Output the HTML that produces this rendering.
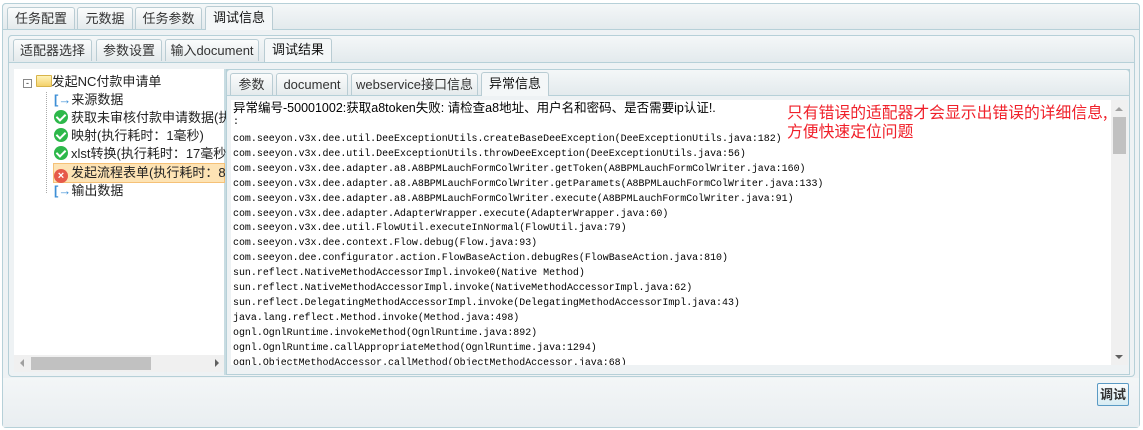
<!DOCTYPE html>
<html><head><meta charset="utf-8">
<style>
*{box-sizing:border-box;margin:0;padding:0}
body{width:1143px;height:430px;background:#fff;font-family:"Liberation Sans","Noto Sans CJK SC",sans-serif;font-size:12px;color:#222;position:relative;overflow:hidden}
.abs{position:absolute}
.hdr{background:linear-gradient(#f4f7f8,#e3eaed);border:1px solid #b6d0d8;border-radius:4px 4px 0 0}
.tab{position:absolute;height:22px;border:1px solid #b9ccd3;border-bottom:none;border-radius:3px 3px 0 0;background:linear-gradient(#fbfcfc,#e4eaec);text-align:center;line-height:21px;font-size:13px;color:#333}
.tab.act{background:#f4f7f8;height:24px;color:#111}
.mono{font-family:"Liberation Mono","Noto Sans CJK SC",monospace;font-size:9.95px;line-height:14.9px;white-space:pre;color:#000}
.tree div{position:absolute;font-size:13px;white-space:nowrap;color:#222;height:18px;line-height:18px}
.ok{display:inline-block;width:14px;height:14px;border-radius:50%;background:#2db84a;vertical-align:-2px;margin-right:3px;position:relative}
.ok:after{content:"";position:absolute;left:4px;top:2px;width:4px;height:7px;border:solid #fff;border-width:0 2px 2px 0;transform:rotate(45deg)}
.err{display:inline-block;width:14px;height:14px;border-radius:50%;background:#e65a4a;vertical-align:-2px;margin-right:3px;color:#fff;font-size:11px;line-height:14px;text-align:center;font-weight:bold}
</style></head><body>
<div class="abs" style="left:2px;top:3px;width:1138px;height:425px;border:1px solid #b6d0d8;border-radius:4px;background:#eef2f4"></div>
<div class="abs hdr" style="left:2px;top:3px;width:1138px;height:27px"></div>
<div class="tab" style="left:7px;top:7px;width:68px">任务配置</div>
<div class="tab" style="left:77px;top:7px;width:56px">元数据</div>
<div class="tab" style="left:135px;top:7px;width:67px">任务参数</div>
<div class="tab act" style="left:205px;top:6px;width:68px">调试信息</div>
<div class="abs" style="left:8px;top:35px;width:1127px;height:342px;border:1px solid #b6d0d8;border-radius:4px;background:#eef2f4"></div>
<div class="abs hdr" style="left:8px;top:35px;width:1127px;height:28px"></div>
<div class="tab" style="left:13px;top:39px;width:79px">适配器选择</div>
<div class="tab" style="left:96px;top:39px;width:66px">参数设置</div>
<div class="tab" style="left:165px;top:39px;width:94px">输入document</div>
<div class="tab act" style="left:264px;top:38px;width:68px">调试结果</div>
<div class="abs" style="left:14px;top:69px;width:210px;height:303px;background:#fff"></div>
<div class="abs" style="left:224px;top:69px;width:2px;height:306px;background:#c8dce2"></div>
<div class="abs" style="left:14px;top:355px;width:210px;height:17px;background:#f0f0f0"></div>
<div class="abs" style="left:31px;top:357px;width:120px;height:13px;background:#c1c1c1"></div>
<div class="abs" style="left:20px;top:359px;width:0;height:0;border:4px solid transparent;border-right:4px solid #a0a0a0;border-left:none"></div>
<div class="abs" style="left:215px;top:359px;width:0;height:0;border:4px solid transparent;border-left:4px solid #606060;border-right:none"></div>
<div class="abs" style="left:53px;top:163px;width:172px;height:20px;background:#fde3b4;border:1px solid #f5c178"></div>
<div class="abs" style="left:46px;top:92px;width:0;height:101px;border-left:1px dotted #aaa"></div>
<div class="tree">
<div style="left:23px;top:73px"><span style="display:inline-block;width:9px;height:9px;border:1px solid #888;font-size:9px;line-height:6px;text-align:center;vertical-align:0">-</span> <span style="display:inline-block;width:16px;height:12px;background:linear-gradient(#fff3b8,#f4d16b);border:1px solid #d8b44a;border-radius:1px;vertical-align:-1px"></span>发起NC付款申请单</div>
<div style="left:54px;top:91px"><span style="color:#3d8fd6;font-weight:bold">[→</span>来源数据</div>
<div style="left:54px;top:109px"><span class="ok"></span>获取未审核付款申请数据(执行</div>
<div style="left:54px;top:127px"><span class="ok"></span>映射(执行耗时：1毫秒)</div>
<div style="left:54px;top:145px"><span class="ok"></span>xlst转换(执行耗时：17毫秒)</div>
<div style="left:54px;top:164px"><span class="err">×</span>发起流程表单(执行耗时：83</div>
<div style="left:54px;top:182px"><span style="color:#3d8fd6;font-weight:bold">[→</span>输出数据</div>
</div>
<div class="abs" style="left:226px;top:69px;width:904px;height:306px;border:1px solid #b6d0d8;background:#eef2f4"></div>
<div class="abs hdr" style="left:226px;top:69px;width:904px;height:27px"></div>
<div class="tab" style="left:230px;top:73px;width:43px">参数</div>
<div class="tab" style="left:276px;top:73px;width:72px">document</div>
<div class="tab" style="left:351px;top:73px;width:127px">webservice接口信息</div>
<div class="tab act" style="left:481px;top:72px;width:68px">异常信息</div>
<div class="abs" style="left:231px;top:100px;width:897px;height:265px;background:#fff;overflow:hidden">
<div class="mono" style="position:absolute;left:2px;top:1px;font-family:'Liberation Sans','Noto Sans CJK SC',sans-serif;font-size:12.5px">异常编号-50001002:获取a8token失败: 请检查a8地址、用户名和密码、是否需要ip认证!.</div>
<div class="mono" style="position:absolute;left:2px;top:15px">:</div>
<div class="mono" style="position:absolute;left:2px;top:32px">com.seeyon.v3x.dee.util.DeeExceptionUtils.createBaseDeeException(DeeExceptionUtils.java:182)
com.seeyon.v3x.dee.util.DeeExceptionUtils.throwDeeException(DeeExceptionUtils.java:56)
com.seeyon.v3x.dee.adapter.a8.A8BPMLauchFormColWriter.getToken(A8BPMLauchFormColWriter.java:160)
com.seeyon.v3x.dee.adapter.a8.A8BPMLauchFormColWriter.getParamets(A8BPMLauchFormColWriter.java:133)
com.seeyon.v3x.dee.adapter.a8.A8BPMLauchFormColWriter.execute(A8BPMLauchFormColWriter.java:91)
com.seeyon.v3x.dee.adapter.AdapterWrapper.execute(AdapterWrapper.java:60)
com.seeyon.v3x.dee.util.FlowUtil.executeInNormal(FlowUtil.java:79)
com.seeyon.v3x.dee.context.Flow.debug(Flow.java:93)
com.seeyon.dee.configurator.action.FlowBaseAction.debugRes(FlowBaseAction.java:810)
sun.reflect.NativeMethodAccessorImpl.invoke0(Native Method)
sun.reflect.NativeMethodAccessorImpl.invoke(NativeMethodAccessorImpl.java:62)
sun.reflect.DelegatingMethodAccessorImpl.invoke(DelegatingMethodAccessorImpl.java:43)
java.lang.reflect.Method.invoke(Method.java:498)
ognl.OgnlRuntime.invokeMethod(OgnlRuntime.java:892)
ognl.OgnlRuntime.callAppropriateMethod(OgnlRuntime.java:1294)
ognl.ObjectMethodAccessor.callMethod(ObjectMethodAccessor.java:68)</div>
<div style="position:absolute;left:556px;top:2px;color:#f0202a;font-size:15.8px;line-height:19px;font-family:'Noto Sans CJK SC',sans-serif;white-space:nowrap">只有错误的适配器才会显示出错误的详细信息,<br>方便快速定位问题</div>
<div style="position:absolute;left:880px;top:0;width:17px;height:265px;background:#f0f0f0"></div>
<div style="position:absolute;left:882px;top:17px;width:13px;height:37px;background:#c1c1c1"></div>
<div style="position:absolute;left:884px;top:7px;border:4px solid transparent;border-bottom:4px solid #a0a0a0;border-top:none"></div>
<div style="position:absolute;left:884px;top:255px;border:4px solid transparent;border-top:4px solid #606060;border-bottom:none"></div>
</div>
<div class="abs" style="left:3px;top:378px;width:1136px;height:49px;background:linear-gradient(#f3f6f7,#e9eef1)"></div>
<div class="abs" style="left:1097px;top:383px;width:32px;height:23px;border:1px solid #5a9ac4;border-radius:2px;background:linear-gradient(#fafcfd,#d7ecf3);text-align:center;line-height:21px;font-size:13px;font-weight:bold;color:#333">调试</div>
</body></html>
